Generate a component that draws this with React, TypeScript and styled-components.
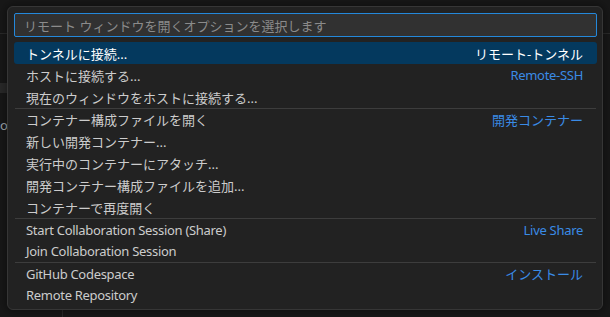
import styled, { createGlobalStyle } from "styled-components";

const GlobalStyle = createGlobalStyle`
  html, body {
    margin: 0;
    padding: 0;
    background: #181818;
  }
  body {
    font-family: "Noto Sans", "Noto Sans CJK JP", sans-serif;
    -webkit-font-smoothing: antialiased;
  }
`;

const Workbench = styled.div`
  position: relative;
  width: 610px;
  height: 317px;
  overflow: hidden;
  background: #181818;
`;

// editor chrome peeking out behind the quick pick
const TabBarLine = styled.div`
  height: 33px;
  border-bottom: 1px solid #2b2b2b;
`;

const SideItem = styled.div`
  margin-top: 49px;
  width: 40px;
  height: 10px;
  background: #2a2a2a;
`;

const SideText = styled.div`
  margin-top: 24px;
  font-size: 13px;
  color: #a0a8b0;
  line-height: 16px;
`;

const StatusLine = styled.div`
  position: absolute;
  left: 62px;
  top: 305px;
  width: 1px;
  height: 12px;
  background: #2b2b2b;
`;

const QuickPick = styled.div`
  position: absolute;
  left: 7px;
  top: 6px;
  width: 596px;
  height: 304px;
  box-sizing: border-box;
  background: #222222;
  border: 1px solid #363636;
  border-radius: 6px;
  box-shadow: 0 0 8px 2px rgba(0, 0, 0, 0.36);
  padding: 6px 5px 0 6px;
  display: flex;
  flex-direction: column;
`;

const InputBox = styled.div`
  height: 24px;
  box-sizing: border-box;
  border: 1px solid #2488db;
  border-radius: 2px;
  background: #313131;
  display: flex;
  align-items: center;
  padding-left: 9px;
  font-size: 13px;
  color: #8b8b8b;
`;

const List = styled.div`
  margin-top: 5px;
  display: flex;
  flex-direction: column;
`;

const Row = styled.div<{ $selected?: boolean; $separator?: boolean }>`
  height: 22px;
  box-sizing: border-box;
  display: flex;
  align-items: center;
  justify-content: space-between;
  font-size: 13px;
  border-radius: ${(p) => (p.$selected ? "3px" : "0")};
  background: ${(p) => (p.$selected ? "#04395e" : "transparent")};
  color: ${(p) => (p.$selected ? "#ffffff" : "#cccccc")};
  border-top: ${(p) => (p.$separator ? "1px solid #3d3d3d" : "none")};
  margin: ${(p) => (p.$separator ? "0 1px" : "0")};
  padding-left: ${(p) => (p.$separator ? "11px" : "12px")};
  padding-right: ${(p) => (p.$separator ? "13px" : "14px")};
`;

const Label = styled.span<{ $latin?: boolean }>`
  white-space: nowrap;
  letter-spacing: ${(p) => (p.$latin ? "-0.3px" : "0")};
`;

const Detail = styled.span<{ $selected?: boolean; $latin?: boolean }>`
  white-space: nowrap;
  color: ${(p) => (p.$selected ? "#ffffff" : "#3a8be6")};
  letter-spacing: ${(p) => (p.$latin ? "-0.3px" : "0")};
`;

type Item = { label: string; detail?: string; separator?: boolean };

const items: Item[] = [
  { label: "トンネルに接続...", detail: "リモート-トンネル" },
  { label: "ホストに接続する...", detail: "Remote-SSH" },
  { label: "現在のウィンドウをホストに接続する..." },
  { label: "コンテナー構成ファイルを開く", detail: "開発コンテナー", separator: true },
  { label: "新しい開発コンテナー..." },
  { label: "実行中のコンテナーにアタッチ..." },
  { label: "開発コンテナー構成ファイルを追加..." },
  { label: "コンテナーで再度開く" },
  { label: "Start Collaboration Session (Share)", detail: "Live Share", separator: true },
  { label: "Join Collaboration Session" },
  { label: "GitHub Codespace", detail: "インストール", separator: true },
  { label: "Remote Repository" },
];

const isLatin = (s: string) => /^[\x20-\x7e]+$/.test(s);

export default function App() {
  return (
    <Workbench>
      <GlobalStyle />
      <TabBarLine />
      <SideItem />
      <SideText>oc</SideText>
      <StatusLine />
      <QuickPick>
        <InputBox>リモート ウィンドウを開くオプションを選択します</InputBox>
        <List>
          {items.map((item, i) => (
            <Row key={item.label} $selected={i === 0} $separator={item.separator}>
              <Label $latin={isLatin(item.label)}>{item.label}</Label>
              {item.detail && (
                <Detail $selected={i === 0} $latin={isLatin(item.detail)}>
                  {item.detail}
                </Detail>
              )}
            </Row>
          ))}
        </List>
      </QuickPick>
    </Workbench>
  );
}
